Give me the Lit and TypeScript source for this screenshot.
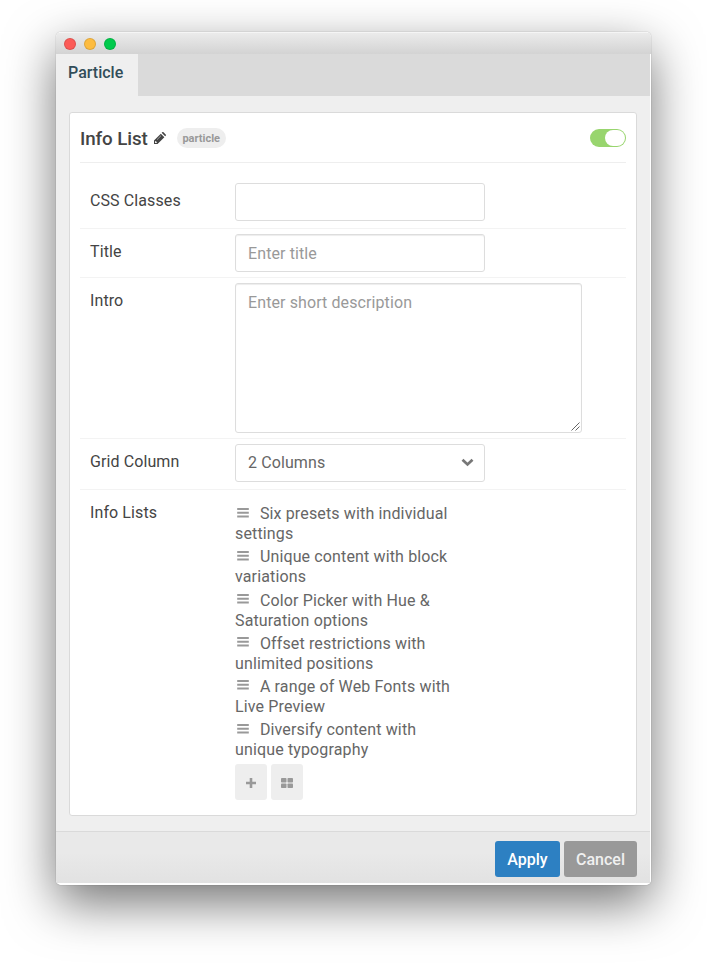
import { LitElement, html, css } from "lit";
import { customElement } from "lit/decorators.js";

const ITEMS = [
  "Six presets with individual settings",
  "Unique content with block variations",
  "Color Picker with Hue & Saturation options",
  "Offset restrictions with unlimited positions",
  "A range of Web Fonts with Live Preview",
  "Diversify content with unique typography",
];

const pencil = html`<svg class="pencil" width="12" height="12" viewBox="0 0 22 22">
  <path fill="#444" fill-rule="evenodd" d="M0 22V15.500L12.500 3L19 9.500L6.500 22ZM3 16.600L2 17.600V20H4.400L5.400 19ZM5.400 13.800L12.600 6.600L13.100 7.100L5.900 14.300ZM14 1.600L15 .6Q16.200-.5 17.500.6L21.400 4.500Q22.500 5.800 21.400 7L20.400 8Z"/>
</svg>`;

const grip = html`<svg class="grip" width="12" height="10" viewBox="0 0 12 10">
  <path fill="#999" d="M.2 0h11.600v2H.2zM.2 3.800h11.600v2H.2zM.2 7.600h11.600v2H.2z"/>
</svg>`;

@customElement("app-root")
export class AppRoot extends LitElement {
  static styles = css`
    :host { display: block; box-sizing: border-box; width: 707px; height: 965px; padding: 32px 56px 0; background: #fff; overflow: hidden; font: 16px/20px Roboto, sans-serif; letter-spacing: .1px; color: #444; }
    * { box-sizing: border-box; }
    .window { width: 595px; height: 853px; border-radius: 5px; background: #fff; overflow: hidden; display: flex; flex-direction: column; }
    .shadow { width: 595px; height: 853px; border-radius: 5px; box-shadow: 0 0 1px rgba(0,0,0,.5), 0 18px 50px rgba(0,0,0,.55); }
    .bar { height: 22px; padding: 0 8px; display: flex; align-items: center; gap: 8px; background: linear-gradient(#ebebeb, #d3d3d3); border-top: 1px solid #f5f5f5; flex: none; }
    .dot { width: 12px; height: 12px; border-radius: 50%; border: 1px solid rgba(0,0,0,.12); }
    .red { background: #fc5b57; }
    .amber { background: #fdbc40; }
    .green { background: #00ca4c; }
    .body { margin-right: 1px; height: 829px; background: #efefef; display: flex; flex-direction: column; }
    .tabs { height: 42px; background: #dadada; flex: none; display: flex; }
    .tab { width: 82px; padding: 9px 0 0 12px; background: #efefef; font-weight: 500; letter-spacing: 0; color: #314d59; }
    .card { margin: 16px 13px 15px; height: 704px; flex: none; border: 1px solid #dadada; border-radius: 3px; background: #fff; padding: 0 10px; }
    .head { height: 50px; border-bottom: 1px solid #eee; display: flex; align-items: center; }
    .name { font-size: 18.8px; font-weight: 500; line-height: 24px; margin-top: 2px; letter-spacing: -.1px; }
    .pencil { margin: 1px 0 0 6px; }
    .pill { margin: 1px 0 0 11px; height: 20px; width: 49px; border-radius: 10px; background: #eee; color: #999; font-size: 11px; font-weight: 700; letter-spacing: 0; text-align: center; line-height: 21px; }
    .toggle { margin: 1px 0 0 auto; width: 36px; height: 18px; border-radius: 9px; background: #98d56e; padding: 1px; display: flex; justify-content: flex-end; }
    .knob { width: 20px; height: 16px; border-radius: 8px; background: #fff; }
    .row { display: flex; align-items: flex-start; padding: 5px 0 5px 10px; border-bottom: 1px solid #f3f3f3; }
    .row.first { padding-top: 20px; height: 66px; }
    .row.pick { padding-bottom: 7px; }
    .row.last { border: 0; padding-top: 14.2px; }
    .label { width: 145px; flex: none; padding-top: 8px; }
    .last .label { padding-top: 0; margin-top: -1px; }
    .field { width: 250px; height: 38px; border: 1px solid #ddd; border-radius: 3px; background: #fff; padding: 9px 12px 0; color: #999; }
    .field.inset { box-shadow: inset 0 1px 1px rgba(0,0,0,.075); }
    .field.area { width: 347px; height: 150px; display: flex; justify-content: space-between; padding-right: 0; padding-bottom: 0; }
    .resize { align-self: flex-end; margin: 0 1px 1px 0; }
    .field.select { color: #666; display: flex; justify-content: space-between; align-items: center; padding: 0 10px 0 12px; }
    .arrow { margin-top: -2px; }
    .list { width: 225px; color: #666; letter-spacing: .14px; }
    .item { min-height: 40px; margin-bottom: 3.2px; }
    .grip { margin: 0 10.900px 0 2px; vertical-align: 1.500px; }
    .tools { display: flex; gap: 4px; margin-top: 3.400px; }
    .tool { width: 32px; height: 36px; border-radius: 3px; background: #eee; display: flex; align-items: center; justify-content: center; padding-top: 2px; }
    .foot { flex: 1; border-top: 1px solid #dadada; background: linear-gradient(#e9e9e9 40%, #e2e2e2); display: flex; justify-content: flex-end; gap: 4px; padding: 9px 13px 0 0; }
    .btn { height: 36px; width: 65px; border-radius: 3px; color: #fff; background: #2d80c2; font-weight: 500; line-height: 37px; letter-spacing: 0; text-align: center; }
    .btn.grey { width: 73px; background: #999; color: #f0f0f0; }
  `;

  render() {
    return html`<div class="shadow"><div class="window">
      <div class="bar"><span class="dot red"></span><span class="dot amber"></span><span class="dot green"></span></div>
      <div class="body">
        <div class="tabs"><div class="tab">Particle</div></div>
        <div class="card">
          <div class="head">
            <span class="name">Info List</span>${pencil}<span class="pill">particle</span>
            <span class="toggle"><span class="knob"></span></span>
          </div>
          <div class="row first"><div class="label">CSS Classes</div><div class="field"></div></div>
          <div class="row"><div class="label">Title</div><div class="field inset">Enter title</div></div>
          <div class="row"><div class="label">Intro</div>
            <div class="field inset area">Enter short description
              <svg class="resize" width="9" height="9" viewBox="0 0 9 9"><path d="M.5 8.500L8.500 .5M4.500 8.500L8.500 4.500" stroke="#666" fill="none"/></svg>
            </div>
          </div>
          <div class="row pick"><div class="label">Grid Column</div>
            <div class="field select">2 Columns
              <svg class="arrow" width="13" height="9" viewBox="0 0 13 9"><path d="M1.500 1.700L6.500 6.500L11.500 1.700" stroke="#777" stroke-width="2.700" fill="none"/></svg>
            </div>
          </div>
          <div class="row last"><div class="label">Info Lists</div>
            <div class="list">
              ${ITEMS.map((t) => html`<div class="item">${grip}${t}</div>`)}
              <div class="tools">
                <span class="tool"><svg width="10" height="10" viewBox="0 0 10 10"><path d="M5 0V10M0 5H10" stroke="#999" stroke-width="2.600"/></svg></span>
                <span class="tool"><svg width="12" height="10" viewBox="0 0 12 10" fill="#999"><rect width="5.500" height="4.500" rx=".8"/><rect x="6.500" width="5.500" height="4.500" rx=".8"/><rect y="5.500" width="5.500" height="4.500" rx=".8"/><rect x="6.500" y="5.500" width="5.500" height="4.500" rx=".8"/></svg></span>
              </div>
            </div>
          </div>
        </div>
        <div class="foot"><div class="btn">Apply</div><div class="btn grey">Cancel</div></div>
      </div>
    </div></div>`;
  }
}
